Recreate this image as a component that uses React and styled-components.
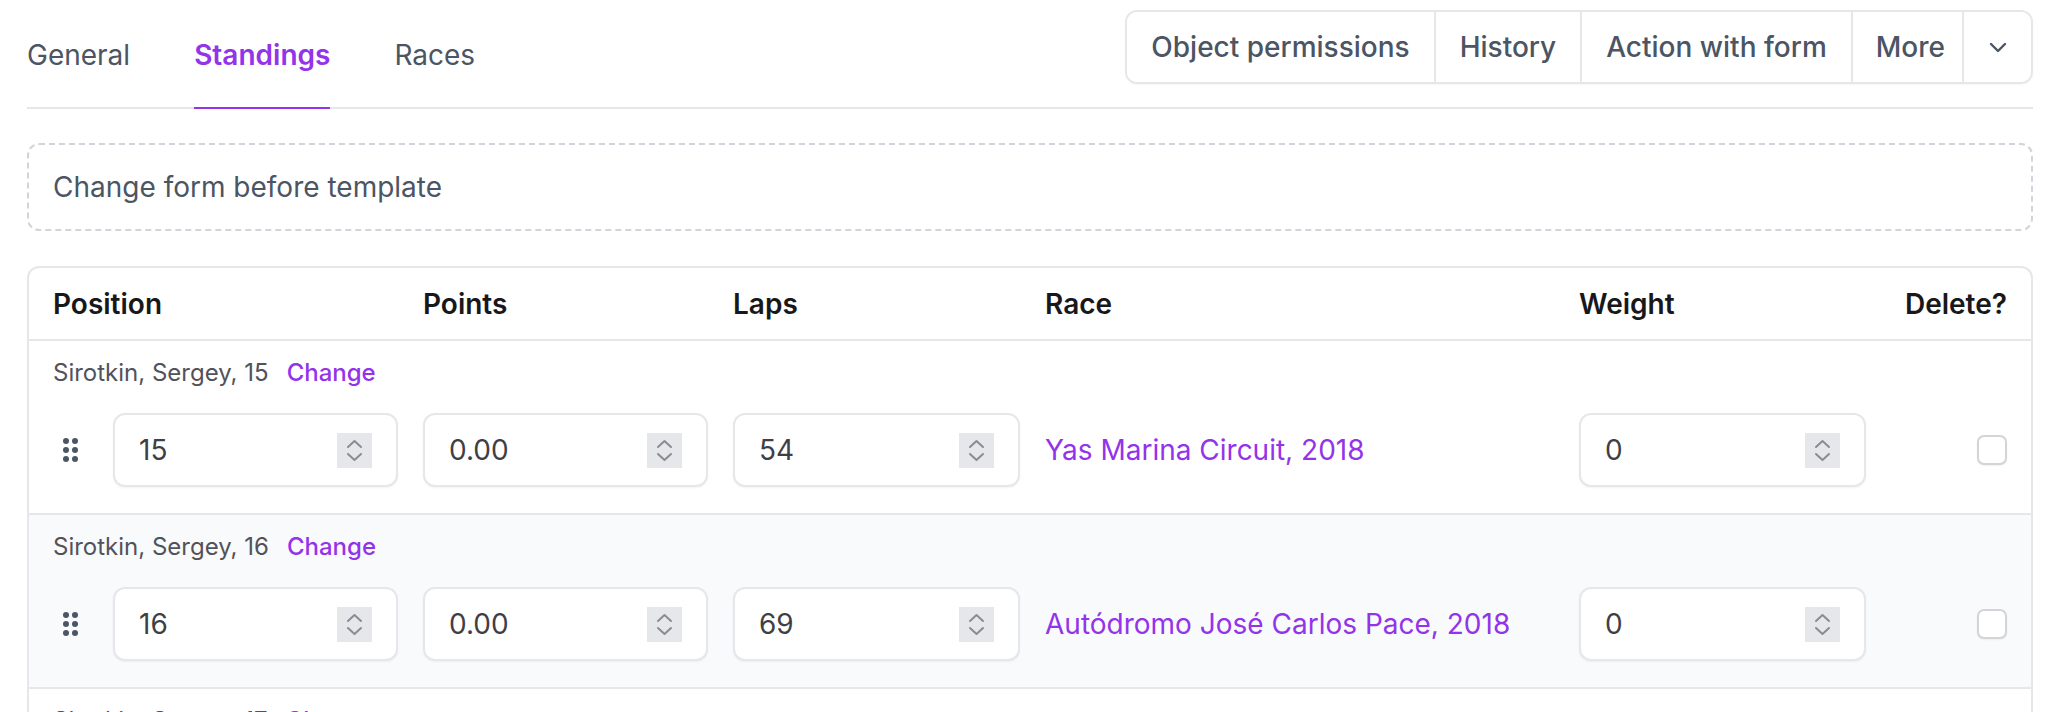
import React from "react";
import styled, { createGlobalStyle, css } from "styled-components";

const GlobalStyle = createGlobalStyle`
  html, body { margin: 0; padding: 0; background: #ffffff; overflow: hidden; }
  body { font-family: Inter, "Noto Sans", sans-serif; -webkit-font-smoothing: antialiased; }
  *, *::before, *::after { box-sizing: border-box; }
`;

const Page = styled.div`
  padding: 10px 27px 0;
`;

const TopBar = styled.div`
  display: flex;
  justify-content: space-between;
  align-items: flex-end;
  border-bottom: 2px solid #e5e7eb;
`;

const Tabs = styled.nav`
  display: flex;
  gap: 64px;
`;

const Tab = styled.a`
  display: block;
  font-size: 28px;
  line-height: 40px;
  padding-bottom: 32px;
  margin-bottom: -2px;
  border-bottom: 2px solid ${(p) => (p.$active ? "#9333ea" : "transparent")};
  color: ${(p) => (p.$active ? "#9333ea" : "#4b5563")};
  font-weight: ${(p) => (p.$active ? 600 : 400)};
  text-decoration: none;
  cursor: pointer;
`;

const ActionGroup = styled.div`
  display: flex;
  height: 74px;
  margin-bottom: 23px;
  border: 2px solid #e5e7eb;
  border-radius: 12px;
  overflow: hidden;
  box-shadow: 0 1px 2px rgba(0, 0, 0, 0.04);
`;

const ActionButton = styled.button`
  display: flex;
  align-items: center;
  justify-content: center;
  padding: ${(p) => p.$pad || "0 24px"};
  border: 0;
  background: #ffffff;
  font-family: Inter, "Noto Sans", sans-serif;
  font-size: 28px;
  font-weight: 500;
  color: #4b5563;
  cursor: pointer;
  & + & {
    border-left: 2px solid #e5e7eb;
  }
`;

const Notice = styled.div`
  margin-top: 34px;
  border: 2px dashed #d1d5db;
  border-radius: 12px;
  padding: 24px;
  font-size: 28px;
  line-height: 36px;
  color: #4b5563;
`;

const columns = css`
  display: grid;
  grid-template-columns: 345px 285px 287px minmax(0, 1fr) 287px 116px;
  column-gap: 25px;
`;

const Table = styled.div`
  margin-top: 35px;
  border: 2px solid #e5e7eb;
  border-bottom: 0;
  border-radius: 12px 12px 0 0;
  overflow: hidden;
`;

const HeadRow = styled.div`
  ${columns};
  height: 71px;
  padding: 0 24px;
  align-items: center;
`;

const HeadCell = styled.div`
  justify-self: ${(p) => (p.$end ? "end" : "start")};
  font-size: 28px;
  font-weight: 600;
  color: #18181b;
`;

const Row = styled.div`
  border-top: 2px solid #e5e7eb;
  background: ${(p) => (p.$striped ? "#f9fafb" : "#ffffff")};
  padding: 16px 24px 26px;
`;

const RowLabel = styled.div`
  display: flex;
  gap: 18px;
  font-size: 24px;
  line-height: 32px;
  color: #52525b;
`;

const ChangeLink = styled.a`
  color: #9333ea;
  font-weight: 500;
  text-decoration: none;
  cursor: pointer;
`;

const Fields = styled.div`
  ${columns};
  margin-top: 24px;
  align-items: center;
`;

const PositionCell = styled.div`
  display: flex;
  align-items: center;
  gap: 35px;
  padding-left: 10px;
  min-width: 0;
`;

const Handle = styled.svg`
  flex: none;
  display: block;
`;

const InputBox = styled.div`
  display: flex;
  align-items: center;
  height: 74px;
  min-width: 0;
  width: 100%;
  padding: 0 24px;
  background: #ffffff;
  border: 2px solid #e5e7eb;
  border-radius: 12px;
  box-shadow: 0 1px 2px rgba(0, 0, 0, 0.05);
  flex: 1 1 0;
`;

const InputField = styled.input`
  flex: 1 1 0;
  width: 0;
  min-width: 0;
  border: 0;
  outline: none;
  background: transparent;
  padding: 0;
  font-family: Inter, "Noto Sans", sans-serif;
  font-size: 28px;
  color: #3f3f46;
`;

const Spinner = styled.svg`
  flex: none;
  display: block;
  background: #e5e7eb;
`;

const RaceLink = styled.a`
  font-size: 28px;
  color: #9333ea;
  text-decoration: none;
  cursor: pointer;
  white-space: nowrap;
`;

const Checkbox = styled.span`
  justify-self: end;
  display: block;
  width: 30px;
  height: 30px;
  border: 2px solid #d4d4d8;
  border-radius: 7px;
  background: #ffffff;
  box-shadow: 0 1px 2px rgba(0, 0, 0, 0.05);
`;

const DragHandle = () => (
  <Handle width="15" height="24" viewBox="0 0 15 24">
    {[3, 12, 21].map((y) =>
      [3, 12].map((x) => <circle key={`${x}-${y}`} cx={x} cy={y} r="3" fill="#4b5563" />)
    )}
  </Handle>
);

const NumberInput = ({ value }) => (
  <InputBox>
    <InputField type="text" size={1} defaultValue={value} />
    <Spinner width="35" height="35" viewBox="0 0 35 35">
      <polyline points="11,14 17.5,8 24,14" fill="none" stroke="#8b8b93" strokeWidth="2" strokeLinecap="round" strokeLinejoin="round" />
      <polyline points="11,21 17.5,27 24,21" fill="none" stroke="#8b8b93" strokeWidth="2" strokeLinecap="round" strokeLinejoin="round" />
    </Spinner>
  </InputBox>
);

const rows = [
  { name: "Sirotkin, Sergey, 15", position: "15", points: "0.00", laps: "54", race: "Yas Marina Circuit, 2018", weight: "0" },
  { name: "Sirotkin, Sergey, 16", position: "16", points: "0.00", laps: "69", race: "Autódromo José Carlos Pace, 2018", weight: "0" },
  { name: "Sirotkin, Sergey, 17", position: "17", points: "0.00", laps: "71", race: "Autódromo Hermanos Rodríguez, 2018", weight: "0" },
];

export default function App() {
  return (
    <>
      <GlobalStyle />
      <Page>
        <TopBar>
          <Tabs>
            <Tab>General</Tab>
            <Tab $active>Standings</Tab>
            <Tab>Races</Tab>
          </Tabs>
          <ActionGroup>
            <ActionButton>Object permissions</ActionButton>
            <ActionButton>History</ActionButton>
            <ActionButton>Action with form</ActionButton>
            <ActionButton $pad="0 17px 0 23px">More</ActionButton>
            <ActionButton $pad="0 24px 0 25px" aria-label="More actions">
              <svg width="18" height="11" viewBox="0 0 18 11">
                <polyline points="2,2 9,9 16,2" fill="none" stroke="#4b5563" strokeWidth="2.4" strokeLinecap="round" strokeLinejoin="round" />
              </svg>
            </ActionButton>
          </ActionGroup>
        </TopBar>

        <Notice>Change form before template</Notice>

        <Table>
          <HeadRow>
            <HeadCell>Position</HeadCell>
            <HeadCell>Points</HeadCell>
            <HeadCell>Laps</HeadCell>
            <HeadCell>Race</HeadCell>
            <HeadCell>Weight</HeadCell>
            <HeadCell $end>Delete?</HeadCell>
          </HeadRow>
          {rows.map((r, i) => (
            <Row key={r.name} $striped={i % 2 === 1}>
              <RowLabel>
                <span>{r.name}</span>
                <ChangeLink>Change</ChangeLink>
              </RowLabel>
              <Fields>
                <PositionCell>
                  <DragHandle />
                  <NumberInput value={r.position} />
                </PositionCell>
                <NumberInput value={r.points} />
                <NumberInput value={r.laps} />
                <RaceLink>{r.race}</RaceLink>
                <NumberInput value={r.weight} />
                <Checkbox />
              </Fields>
            </Row>
          ))}
        </Table>
      </Page>
    </>
  );
}
